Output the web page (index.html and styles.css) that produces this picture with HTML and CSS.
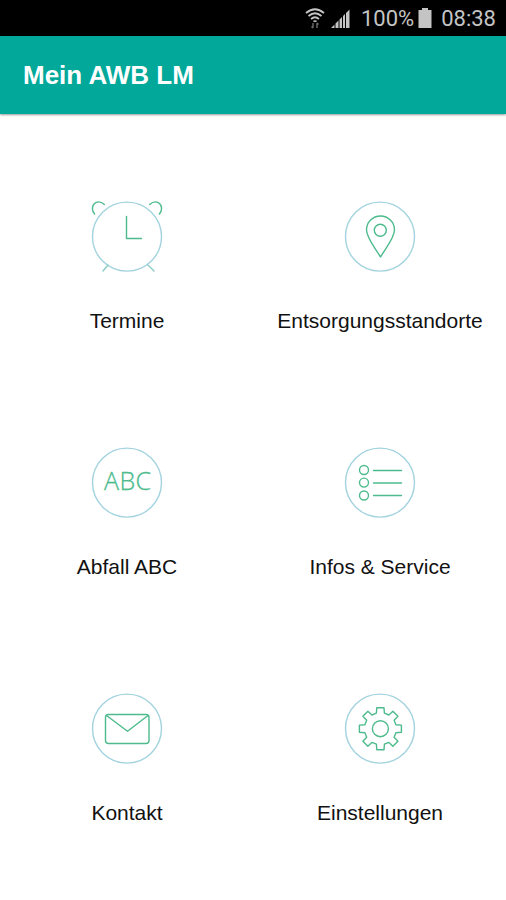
FILE: index.html
```html
<!DOCTYPE html>
<html lang="de">
<head>
    <meta charset="UTF-8">
    <meta name="viewport" content="width=device-width, initial-scale=1.0">
    <title>Mein AWB LM</title>
    <link rel="stylesheet" href="styles.css">
</head>
<body>
    <!-- Status bar -->
    <div class="status-bar">
        <svg class="wifi" width="20" height="22" viewBox="0 0 20 22">
            <path class="arc" d="M1 6Q10 -1.500 19 6M3.500 9Q10 3.500 16.500 9M6 12Q10 8.500 14 12M8.500 14.500Q10 13.500 11.500 14.500"/>
            <path class="arrows" d="M8 16v5M6.500 19.500L8 21M12 21v-5M13.500 17.500L12 16"/>
        </svg>
        <svg class="signal" width="19" height="19" viewBox="0 0 19 19">
            <path d="M0 19L3.500 15.500V19zM4.500 14.500L7.500 11.500V19H4.500zM8.500 10.500L11 8V19H8.500zM12 7L14 5V19H12zM15 4L18.500 .5V19H15z"/>
        </svg>
        <span class="percent">100%</span>
        <svg class="battery" width="14" height="20" viewBox="0 0 14 20">
            <path d="M4 0h6v2h3.500v18H.5V2H4z"/>
        </svg>
        <span class="clock">08:38</span>
    </div>

    <header>
        <h1>Mein AWB LM</h1>
    </header>

    <!-- Menu -->
    <main class="menu">
        <a class="tile">
            <svg class="icon" viewBox="0 0 90 90">
                <circle class="ring" cx="45" cy="44.600" r="34.500"/>
                <path class="feet" d="M26 73L21 79M66 73L72 79"/>
                <path d="M12.600 22C6.500 15 14.500 5 22.300 12.500M77.400 22C83.500 15 75.500 5 67.700 12.500M44.500 24.500V46.500H59.500"/>
            </svg>
            <span>Termine</span>
        </a>
        <a class="tile">
            <svg class="icon" viewBox="0 0 90 90">
                <circle class="ring" cx="45" cy="44.600" r="34.500"/>
                <path d="M45.500 65C41 57 31.500 46 31.500 38A14 14 0 0 1 59.500 38C59.500 46 50 57 45.500 65z"/>
                <circle cx="45.300" cy="38.300" r="6"/>
            </svg>
            <span>Entsorgungsstandorte</span>
        </a>
        <a class="tile">
            <svg class="icon" viewBox="0 0 90 90">
                <circle class="ring" cx="45" cy="44.600" r="34.500"/>
                <text x="45.500" y="52" textLength="47">ABC</text>
            </svg>
            <span>Abfall ABC</span>
        </a>
        <a class="tile">
            <svg class="icon" viewBox="0 0 90 90">
                <circle class="ring" cx="45" cy="44.600" r="34.500"/>
                <circle cx="29" cy="32" r="4.500"/>
                <circle cx="29" cy="44.600" r="4.500"/>
                <circle cx="29" cy="57.500" r="4.500"/>
                <path d="M38.500 32.500H66.500M38.500 45H66.500M38.500 57.500H66.500"/>
            </svg>
            <span>Infos &amp; Service</span>
        </a>
        <a class="tile">
            <svg class="icon" viewBox="0 0 90 90">
                <circle class="ring" cx="45" cy="44.600" r="34.500"/>
                <rect x="23.500" y="30.500" width="43.500" height="29" rx="3"/>
                <path d="M24.500 31.500L45.500 47.300L66 31.500"/>
            </svg>
            <span>Kontakt</span>
        </a>
        <a class="tile">
            <svg class="icon" viewBox="0 0 90 90">
                <circle class="ring" cx="45" cy="44.600" r="34.500"/>
                <g transform="translate(45.400 44.700)">
                    <path d="M-4 -15.500L-3.600 -21H3.600L4 -15.500L8.500 -13.700L12.500 -17.500L17.500 -12.500L13.700 -8.500L15.500 -4L21 -3.600V3.600L15.500 4L13.700 8.500L17.500 12.500L12.500 17.500L8.500 13.700L4 15.500L3.600 21H-3.600L-4 15.500L-8.500 13.700L-12.500 17.500L-17.500 12.500L-13.700 8.500L-15.500 4L-21 3.600V-3.600L-15.500 -4L-13.700 -8.500L-17.500 -12.500L-12.500 -17.500L-8.500 -13.700z"/>
                    <circle r="8"/>
                </g>
            </svg>
            <span>Einstellungen</span>
        </a>
    </main>
</body>
</html>
```

FILE: styles.css
```css
body {
    margin: 0;
    padding: 0;
    font-family: "Liberation Sans", Arial, sans-serif;
    background-color: #fff;
    color: #111;
}

/* Status bar */
.status-bar {
    display: flex;
    align-items: center;
    justify-content: flex-end;
    box-sizing: border-box;
    height: 36px;
    padding-right: 10px;
    background-color: #000;
    color: #c4c4c4;
    font-family: Roboto, sans-serif;
    font-size: 22px;
}

.status-bar svg {
    fill: #c4c4c4;
}

.wifi {
    margin-right: 6px;
}

.status-bar .arc {
    fill: none;
    stroke: #c4c4c4;
    stroke-width: 1.7;
}

.status-bar .arrows {
    fill: none;
    stroke: #666;
    stroke-width: 1.5;
}

.signal {
    margin-right: 11px;
}

.percent {
    margin-right: 4px;
}

.battery {
    margin-right: 9px;
}

header {
    box-sizing: border-box;
    height: 78px;
    padding: 24px 23px 0;
    background-color: #02a99a;
    box-shadow: 0 1px 2px rgba(0, 0, 0, 0.4);
}

h1 {
    margin: 0;
    font-size: 26px;
    line-height: 30px;
    color: #fff;
}

/* Menu */
.menu {
    display: grid;
    grid-template-columns: 1fr 1fr;
    grid-auto-rows: 246px;
}

.tile {
    display: flex;
    flex-direction: column;
    align-items: center;
    padding: 78px 0 0 1px;
    font-size: 21px;
    line-height: 24px;
    white-space: nowrap;
}

.icon {
    width: 90px;
    height: 90px;
    margin-bottom: 27px;
    fill: none;
    stroke: #4dbb8d;
    stroke-width: 1.4;
    stroke-linecap: round;
    stroke-linejoin: round;
}

.icon .ring {
    stroke: #a3d3df;
}

.icon .feet {
    stroke: #8accc4;
}

.icon text {
    font-family: "Open Sans", sans-serif;
    font-size: 25px;
    font-weight: 300;
    text-anchor: middle;
    fill: #4dbb8d;
    stroke-width: 0.3;
}
```
